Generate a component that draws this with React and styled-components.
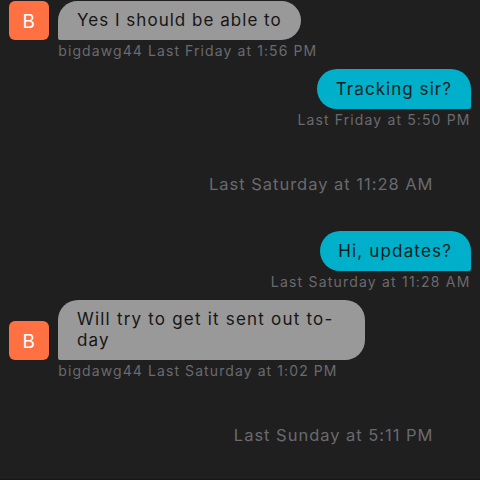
import styled, {createGlobalStyle} from "styled-components"

const items = [
    {kind: "message", lines: ["Yes I should be able to"], spacing: 1.02, author: "bigdawg44", time: "Last Friday at 1:56 PM"},
    {kind: "message", mine: true, lines: ["Tracking sir?"], spacing: 1.05, time: "Last Friday at 5:50 PM", metaSpacing: 1.13},
    {kind: "divider", time: "Last Saturday at 11:28 AM"},
    {kind: "message", mine: true, lines: ["Hi, updates?"], spacing: 1.17, time: "Last Saturday at 11:28 AM", metaSpacing: 1.2},
    {kind: "message", wide: true, lines: ["Will try to get it sent out to-", "day"], spacing: 1.2, author: "bigdawg44", time: "Last Saturday at 1:02 PM"},
    {kind: "divider", time: "Last Sunday at 5:11 PM"}
]

export default function App(){
    return (
        <>
            <GlobalStyle/>
            <Chat>
                {items.map((item, id) => {
                    if(item.kind === "divider"){
                        return <Divider key={id}>{item.time}</Divider>
                    }
                    return <Message key={id} {...item}/>
                })}
                <BottomEdge/>
            </Chat>
        </>
    )
}

function Message({mine, wide, lines, spacing, author, time, metaSpacing = 1.09}){
    return (
        <Row $mine={mine}>
            {!mine && <Avatar>B</Avatar>}
            <Column $mine={mine}>
                <Bubble $mine={mine} $wide={wide} $spacing={spacing}>
                    {lines.map((line, id) => <p key={id}>{line}</p>)}
                </Bubble>
                <Meta $spacing={metaSpacing}>{author ? `${author} ${time}` : time}</Meta>
            </Column>
        </Row>
    )
}

const GlobalStyle = createGlobalStyle`
    *{
        box-sizing: border-box;
    }
    body{
        margin: 0;
        background: #1F1F1F;
        font-family: Inter, "Liberation Sans", sans-serif;
    }
    p{
        margin: 0;
    }
`
const Chat = styled.div`
    display: flex;
    position: relative;
    flex-direction: column;
    width: 480px;
    height: 480px;
    padding: 0.5px 9.5px 0 9.25px;
    overflow: hidden;
    background: #1F1F1F;
`
const Row = styled.div`
    display: flex;
    flex-shrink: 0;
    justify-content: ${props => props.$mine ? "flex-end" : "flex-start"};
    align-items: flex-end;
    gap: 9px;
    padding-bottom: 7px;
`
const Column = styled.div`
    display: flex;
    flex-direction: column;
    align-items: ${props => props.$mine ? "flex-end" : "flex-start"};
`
const Avatar = styled.div`
    display: flex;
    align-items: center;
    justify-content: center;
    width: 40px;
    height: 39.5px;
    margin-bottom: 22px;
    padding: 1.5px 1px 0 0;
    border-radius: 6px;
    background: #FF7043;
    color: #FFFFFF;
    font-size: 19px;
`
const Bubble = styled.div`
    width: ${props => props.$wide ? "306.5px" : "auto"};
    padding: ${props => props.$mine ? "9.75px 18.5px 8.75px" : "9px 18.75px 9.5px"};
    border-radius: ${props => props.$mine ? "20px 20px 2px 20px" : "20px 20px 20px 2px"};
    background: ${props => props.$mine ? "#00B0CA" : "#999999"};
    color: ${props => props.$mine ? "#0A1E22" : "#161616"};
    font-size: 17px;
    line-height: 21px;
    letter-spacing: ${props => props.$spacing}px;
    white-space: nowrap;
`
const Meta = styled.p`
    height: 22px;
    color: #696A6E;
    font-size: 14px;
    line-height: 22px;
    letter-spacing: ${props => props.$spacing}px;
    white-space: nowrap;
`
const Divider = styled.p`
    flex-shrink: 0;
    height: 93.5px;
    padding-right: 37px;
    color: #696A6E;
    font-size: 16.5px;
    line-height: 92.5px;
    letter-spacing: 0.98px;
    text-align: right;
`
const BottomEdge = styled.div`
    position: absolute;
    left: 0;
    right: 0;
    bottom: 0;
    height: 1px;
    background: #1C141A;
`
